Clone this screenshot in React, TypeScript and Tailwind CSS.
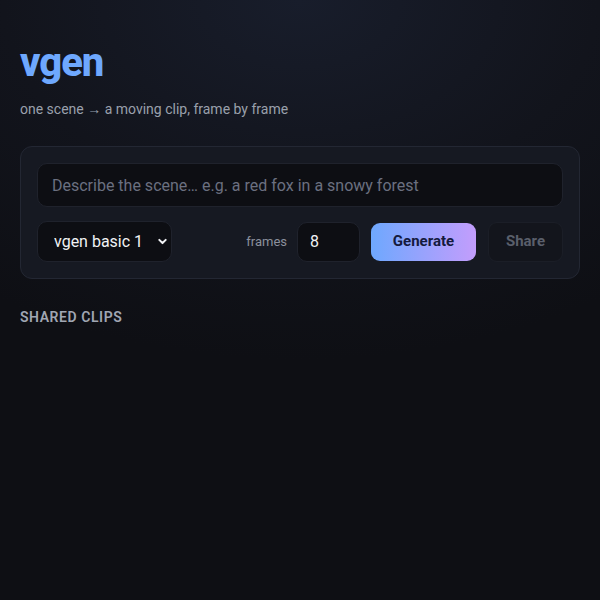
import React from "react";

export default function App() {
  return (
    <div
      className="min-h-[600px] w-full bg-[#0e0f14] bg-[radial-gradient(ellipse_90%_60%_at_50%_0%,#181d2b_0%,#12141c_55%,#0e0f14_100%)] text-[#e5e7eb]"
      style={{ fontFamily: "Roboto, 'Noto Sans', sans-serif" }}
    >
      <div className="px-5 pt-[43px]">
        <h1 className="text-[40px] font-extrabold leading-[40px] tracking-[-0.025em] text-[#6ea8fe]">vgen</h1>
        <p className="mt-[16px] text-[14px] leading-[20px] text-[#9aa0ac]">
          one scene → a moving clip, frame by frame
        </p>

        <div className="mt-[27px] rounded-[12px] border border-[#232733] bg-[#161922] p-4">
          <input
            className="block h-[44px] w-full rounded-[10px] border border-[#1f222c] bg-[#0d0e13] px-[14px] text-[16px] text-[#e5e7eb] outline-none placeholder:text-[#6b7080]"
            placeholder="Describe the scene… e.g. a red fox in a snowy forest"
          />
          <div className="mt-[14px] flex items-center">
            <div className="relative">
              <select
                defaultValue="vgen basic 1"
                className="h-[41px] w-[135px] appearance-none rounded-[10px] border border-[#1f222c] bg-[#0d0e13] pl-[16px] text-[16px] text-[#f1f2f5] outline-none"
              >
                <option>vgen basic 1</option>
              </select>
              <svg
                className="pointer-events-none absolute right-[4px] top-[15px]"
                width="11"
                height="11"
                viewBox="0 0 12 12"
                fill="none"
              >
                <path d="M2.5 4.2 L6 7.7 L9.5 4.2" stroke="#f1f2f5" strokeWidth="2.2" strokeLinecap="round" strokeLinejoin="round" />
              </svg>
            </div>
            <div className="flex-1" />
            <span className="text-[13px] text-[#8b909c]">frames</span>
            <input
              defaultValue="8"
              className="ml-[10px] h-[40px] w-[63px] rounded-[10px] border border-[#1f222c] bg-[#0d0e13] px-[12px] text-[16px] text-[#f1f2f5] outline-none"
            />
            <button className="ml-[11px] h-[38px] w-[105px] rounded-[9px] bg-[linear-gradient(90deg,#6ea8fe,#c39dfc)] text-[15px] font-bold text-[#141a3d]">
              Generate
            </button>
            <button
              disabled
              className="ml-[12px] h-[40px] w-[75px] rounded-[9px] border border-[#1b1e27] bg-[#13151c] text-[15px] font-bold text-[#5a5f6b]"
            >
              Share
            </button>
          </div>
        </div>

        <h2 className="mt-[28px] text-[14px] font-semibold uppercase leading-[20px] tracking-[0.04em] text-[#a0a6b3]">
          Shared clips
        </h2>
      </div>
    </div>
  );
}
